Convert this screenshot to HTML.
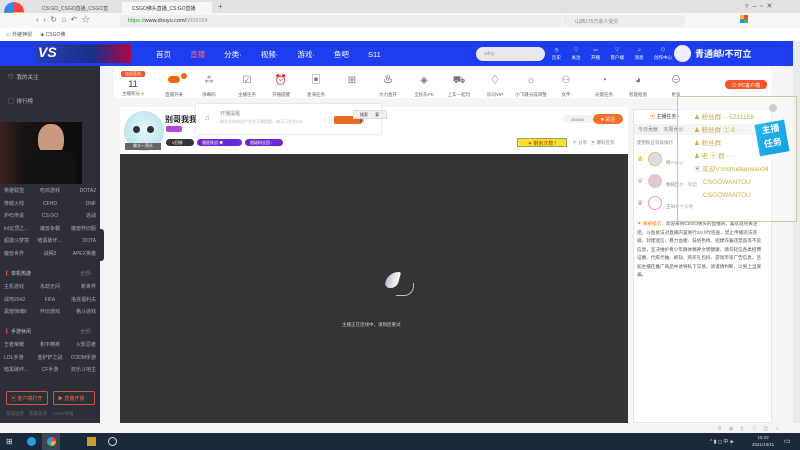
<!DOCTYPE html>
<html><head><meta charset="utf-8"><style>
*{margin:0;padding:0;box-sizing:border-box}
body{width:800px;height:450px;overflow:hidden;position:relative;background:#f5f5f5;font-family:"Liberation Sans","Noto Sans CJK SC",sans-serif;font-size:6px;color:#333}
.a{position:absolute}
.w{color:#fff}
.g{position:absolute;left:4px;width:92px;display:grid;grid-template-columns:33% 34% 33%;font-size:5px;color:#aaa;line-height:12.5px;white-space:nowrap;overflow:hidden}
.g span:nth-child(3n+2){text-align:center}.g span:nth-child(3n){text-align:right}
.ti{position:absolute;top:74px;width:40px;margin-left:-20px;text-align:center;color:#777}
.ti i{display:block;font-style:normal;font-size:10px;height:14px;line-height:14px}
.ti b{display:block;font-weight:normal;font-size:4.5px;color:#666;margin-top:4px}
</style></head><body>
<!-- tab bar -->
<div class="a" style="left:0;top:0;width:800px;height:13px;background:#e2e2e2"></div>
<div class="a" style="left:4px;top:2px;width:20px;height:20px;border-radius:50%;background:conic-gradient(#f44 0 25%,#fb3 0 50%,#3b8 0 75%,#38f 0)"></div>
<div class="a" style="left:3px;top:18px;width:24px;height:6px;background:#e53;color:#fff;font-size:4px;text-align:center">立即登录</div>
<div class="a" style="left:32px;top:2px;width:88px;height:11px;font-size:5px;color:#555;padding:3px 10px;white-space:nowrap;overflow:hidden">CS:GO_CSGO直播_CSGO直</div>
<div class="a" style="left:122px;top:2px;width:90px;height:11px;background:#f7f7f7;font-size:5px;padding:3px 10px;white-space:nowrap;overflow:hidden">CSGO佛头直播_CS:GO直播</div>
<div class="a" style="left:218px;top:2px;font-size:8px;color:#666">+</div>
<div class="a" style="left:745px;top:2px;font-size:7px;color:#555">▿ &nbsp;–&nbsp; ▫ &nbsp;✕</div>
<!-- address -->
<div class="a" style="left:0;top:13px;width:800px;height:15px;background:#f7f7f7"></div>
<div class="a" style="left:36px;top:14px;font-size:8px;color:#777">‹ &nbsp;› &nbsp;↻ &nbsp;⌂ &nbsp;↶ &nbsp;☆</div>
<div class="a" style="left:120px;top:15px;width:442px;height:12px;background:#eeeeee;font-size:5.5px;padding:3px 8px;color:#333"><span style="color:#2a2">https://</span>www.douyu.com/<span style="color:#999">6959154</span></div>
<div class="a" style="left:563px;top:15px;width:122px;height:12px;background:#eeeeee;font-size:5px;padding:3px 12px;color:#888">山西175万余人受灾</div>
<div class="a" style="left:740px;top:15px;width:8px;height:8px;background:conic-gradient(#e44 0 25%,#4b4 0 50%,#48f 0 75%,#fb2 0)"></div>
<!-- bookmarks -->
<div class="a" style="left:0;top:28px;width:800px;height:13px;background:#fff;font-size:5px;color:#555;padding:3px 6px">▭ 外链神授 &nbsp;&nbsp;&nbsp;&nbsp; ◈ CSGO佛</div>
<!-- blue nav -->
<div class="a" style="left:0;top:41px;width:793px;height:25px;background:#1d3ef0"></div>
<div class="a" style="left:36px;top:44px;width:95px;height:19px;background:linear-gradient(90deg,#2a3fa8,#1a2a70 60%,#b02 95%);opacity:.8"></div>
<div class="a w" style="left:38px;top:44px;font-size:14px;font-weight:bold;font-style:italic">VS</div>
<div class="a w" style="left:156px;top:49px;font-size:7.5px;word-spacing:17px">首页 <span style="color:#f66">直播</span> 分类· 视频· 游戏· 鱼吧 S11</div>
<div class="a" style="left:476px;top:47px;width:69px;height:14px;background:#e8e8ee;border-radius:7px;font-size:5px;color:#999;padding:4px 8px">sdoy</div>
<div class="a w" style="left:552px;top:46px;width:120px;font-size:4.5px;line-height:8px;display:flex;justify-content:space-between;text-align:center"><span>◷<br>历史</span><span>♡<br>关注</span><span>▭<br>开播</span><span>▽<br>客户端</span><span>♫<br>消息</span><span>◎<br>创作中心</span></div>
<div class="a" style="left:674px;top:45px;width:17px;height:17px;border-radius:50%;background:#eef"></div>
<div class="a w" style="left:695px;top:47px;font-size:9px;font-weight:bold">青通邮/不可立</div>
<!-- right scroll -->
<div class="a" style="left:793px;top:41px;width:7px;height:392px;background:#eaeaea"></div>
<!-- sidebar -->
<div class="a" style="left:0;top:66px;width:100px;height:357px;background:#2c2f37"></div>
<div class="a" style="left:8px;top:72px;font-size:5.5px;color:#bbb;line-height:12px">♡ &nbsp;我的关注<br><br>▢ &nbsp;排行榜<br><br>◯ &nbsp;页游中心</div>
<div class="a" style="left:0;top:122px;width:82px;height:62px;background:linear-gradient(90deg,#3a2520,#161210 30%,#0c0c0c)"></div>
<div class="a" style="left:38px;top:124px;width:26px;height:32px;border-radius:45%;background:#c99a80"></div>
<div class="a" style="left:30px;top:150px;width:46px;height:34px;border-radius:12px 12px 0 0;background:#111"></div>
<div class="g" style="top:185px"><span>英雄联盟</span><span>吃鸡游戏</span><span>DOTA2</span><span>穿越火线</span><span>CFHD</span><span>DNF</span><span>炉石传说</span><span>CS:GO</span><span>逃战</span><span>lol云顶之…</span><span>魔兽争霸</span><span>魔兽怀旧服</span><span>超激斗梦境</span><span>暗黑破坏…</span><span>DOTA</span><span>魔兽世界</span><span>战网3</span><span>APEX英雄</span></div>
<div class="a" style="left:6px;top:270px;font-size:5px;color:#ccc"><span style="color:#e44">▎</span>单机热游</div><div class="a" style="left:80px;top:270px;font-size:5px;color:#777">全部›</div>
<div class="g" style="top:281px"><span>主机游戏</span><span>永劫无间</span><span>新世界</span><span>战地2042</span><span>FIFA</span><span>洛克福利夫</span><span>黑暗惊魂6</span><span>怀旧游戏</span><span>格斗游戏</span></div>
<div class="a" style="left:6px;top:328px;font-size:5px;color:#ccc"><span style="color:#e44">▎</span>手游休闲</div><div class="a" style="left:80px;top:328px;font-size:5px;color:#777">全部›</div>
<div class="g" style="top:339px"><span>王者荣耀</span><span>和平精英</span><span>火影忍者</span><span>LOL手游</span><span>金铲铲之战</span><span>CODM手游</span><span>暗黑破坏…</span><span>CF手游</span><span>欢乐斗地主</span></div>
<div class="a" style="left:6px;top:411px;font-size:4.5px;color:#666">渠道运营 &nbsp;&nbsp;&nbsp;客服支持 &nbsp;&nbsp;&nbsp;12318举报</div>
<div class="a" style="left:6px;top:391px;width:42px;height:14px;border:1px solid #c54;border-radius:2px;color:#e64;font-size:5px;padding:3px 4px">▣ 客户端打开</div>
<div class="a" style="left:53px;top:391px;width:42px;height:14px;border:1px solid #c54;border-radius:2px;color:#e64;font-size:5px;padding:3px 4px">▶ 直播开播</div>
<div class="a" style="left:98px;top:229px;width:6px;height:32px;background:#2c2f37;border-radius:0 3px 3px 0"></div>
<!-- toolbar -->
<div class="a" style="left:114px;top:68px;width:657px;height:30px;background:#fff"></div>
<div class="a" style="left:121px;top:71px;width:24px;height:6px;background:#f5562b;color:#fff;font-size:4px;text-align:center;border-radius:2px">连续签到</div>
<div class="a" style="left:133px;top:79px;font-size:9px;transform:translateX(-50%)">11</div>
<div class="a" style="left:122px;top:91px;font-size:4.5px;color:#666">主播积分 <span style="color:#f80">●</span></div>
<div class="ti" style="left:174px"><i><span style="display:inline-block;width:12px;height:7px;background:#f60;border-radius:4px"></span></i><b>直播开关</b></div>
<div class="a" style="left:181px;top:73px;width:6px;height:6px;background:#f60;border-radius:50%"></div>
<div class="ti" style="left:209px"><i>⁂</i><b>弹幕码</b></div>
<div class="ti" style="left:247px"><i>☑</i><b>主播任务</b></div>
<div class="ti" style="left:281px"><i>⏰</i><b>开播提醒</b></div>
<div class="ti" style="left:316px"><i>▣</i><b>星海任务</b></div>
<div class="ti" style="left:352px"><i>⊞</i><b>&nbsp;</b></div>
<div class="ti" style="left:388px"><i>♨</i><b>大力金开</b></div>
<div class="ti" style="left:424px"><i>◈</i><b>全民乐PK</b></div>
<div class="ti" style="left:459px"><i>⛟</i><b>上车一起玩</b></div>
<div class="ti" style="left:495px"><i>♢</i><b>房间VIP</b></div>
<div class="ti" style="left:531px"><i>☼</i><b>小飞碟分成调整</b></div>
<div class="ti" style="left:566px"><i>⚇</i><b>女伴</b></div>
<div class="ti" style="left:604px"><i>◔</i><b>光能任务</b></div>
<div class="ti" style="left:638px"><i>◕</i><b>智能抠图</b></div>
<div class="ti" style="left:676px"><i>⊖</i><b>更多</b></div>
<div class="a" style="left:725px;top:80px;width:42px;height:9px;background:#f5562b;border-radius:4px;color:#fff;font-size:5px;text-align:center;padding-top:1.5px">⊙ PC客户端</div>
<!-- anchor info -->
<div class="a" style="left:120px;top:107px;width:508px;height:47px;background:#fff"></div>
<div class="a" style="left:124px;top:111px;width:40px;height:40px;border-radius:50%;background:radial-gradient(circle at 50% 45%,#e8f8fb,#a9dde6)"></div>
<div class="a" style="left:133px;top:126px;width:7px;height:7px;border-radius:50%;background:#333;box-shadow:14px 0 #333"></div>
<div class="a" style="left:125px;top:143px;width:36px;height:7px;background:#666;color:#fff;font-size:4px;text-align:center">佛头一哥头</div>
<div class="a" style="left:165px;top:114px;font-size:8px;font-weight:bold;color:#222">别哥我我</div>
<div class="a" style="left:166px;top:126px;width:16px;height:6px;background:#b048e0;border-radius:2px"></div>
<div class="a" style="left:166px;top:139px;width:28px;height:7px;background:#333;border-radius:4px;color:#fff;font-size:4px;padding:1px 6px">V回馈</div>
<div class="a" style="left:197px;top:139px;width:45px;height:7px;background:#6a28d8;border-radius:4px;color:#fff;font-size:4px;padding:1px 5px">福星挑战 ◆</div>
<div class="a" style="left:245px;top:139px;width:38px;height:7px;background:#6a28d8;border-radius:4px;color:#fff;font-size:4px;padding:1px 5px">超级粉丝团 ›</div>
<div class="a" style="left:196px;top:104px;width:185px;height:30px;background:#fff;box-shadow:0 0 2px #ccc;font-size:5px;color:#888;padding:6px 24px;line-height:8px">开播提醒<br><span style="font-size:4px;color:#bbb">每关注你的用户发送开播提醒，每天可发送3次</span></div>
<div class="a" style="left:204px;top:113px;font-size:8px;color:#aaa">♫</div>
<div class="a" style="left:334px;top:116px;width:28px;height:8px;background:#e86a20;border-radius:2px"></div>
<div class="a" style="left:353px;top:110px;width:34px;height:9px;background:#f0f0f0;border:1px solid #ddd;font-size:4px;padding:1px 6px;word-spacing:6px">搜索 复制</div>
<div class="a" style="left:563px;top:115px;width:30px;height:8px;background:#f2f2f2;border-radius:4px;font-size:4px;color:#888;padding:1.5px 8px">366654</div>
<div class="a" style="left:593px;top:114px;width:30px;height:10px;background:#f5702b;border-radius:5px;color:#fff;font-size:5px;text-align:center;padding-top:2px">♥ 关注</div>
<div class="a" style="left:517px;top:138px;width:50px;height:9px;background:#ffe030;border:1px solid #8a6;font-size:5px;color:#a30;text-align:center;padding-top:1px">✦ 剩余次数 !</div>
<div class="a" style="left:573px;top:140px;font-size:4.5px;color:#888">⇱ 分享 &nbsp;&nbsp;▣ 爆料签到</div>
<!-- video -->
<div class="a" style="left:120px;top:154px;width:508px;height:269px;background:#343434"></div>
<div class="a" style="left:386px;top:272px;width:13px;height:16px;background:linear-gradient(90deg,#bbc,#fff);border-radius:10px 2px 6px 6px;transform:skewX(-15deg)"></div>
<div class="a" style="left:396px;top:283px;width:18px;height:13px;border:1.5px solid #bbb;border-top:none;border-left:none;border-radius:0 0 10px 0"></div>
<div class="a" style="left:342px;top:322px;font-size:4.5px;color:#ccc">主播正在连线中，请稍后重试</div>
<!-- chat -->
<div class="a" style="left:633px;top:109px;width:139px;height:314px;background:#fff;border:1px solid #e6e6e6"></div>
<div class="a" style="left:634px;top:124px;width:137px;height:11px;background:#f2f2f2;font-size:5px;color:#888;padding:2px 4px">今日贡献 &nbsp;&nbsp;&nbsp;本周贡献</div>
<div class="a" style="left:650px;top:113px;font-size:5px;color:#444"><span style="color:#f80">▣</span> 主播任务 ›</div>
<div class="a" style="left:637px;top:140px;font-size:4.5px;color:#888">使用粉丝等级排行</div>
<div class="a" style="left:637px;top:155px;font-size:7px;color:#f5b400">♛</div>
<div class="a" style="left:648px;top:152px;width:14px;height:14px;border-radius:50%;background:#dde;border:1px solid #e8c060"></div>
<div class="a" style="left:637px;top:177px;font-size:7px;color:#bbb">♛</div>
<div class="a" style="left:648px;top:174px;width:14px;height:14px;border-radius:50%;background:#e4c8d0"></div>
<div class="a" style="left:637px;top:199px;font-size:7px;color:#d98">♛</div>
<div class="a" style="left:648px;top:196px;width:14px;height:14px;border-radius:50%;background:#fff;border:1px solid #e99"></div>
<div class="a" style="left:666px;top:152px;font-size:4.5px;color:#888;line-height:22px">韩一yyyi<br>黎铭鼠水 · 联盟<br>王叫令今天哦</div>
<div class="a" style="left:637px;top:220px;width:128px;font-size:4.6px;color:#555;line-height:8.5px"><span style="color:#f60">▣ 系统提示：</span>欢迎来到CSGO佛头的直播间，喜欢就点关注吧。斗鱼依法对直播内容进行24小时巡查，禁止传播违法违规、封建迷信、暴力血腥、低俗色情、招嫖诈骗违禁品等不良信息，坚决维护青少年群体精神文明健康。请勿轻信各类招聘征婚、代练代抽、刷钻、购买礼包码、游戏币等广告信息，且如主播在推广商品中诱导私下交易，请谨慎判断，以免上当受骗。</div>
<!-- overlay -->
<div class="a" style="left:677px;top:96px;width:120px;height:126px;border:1.5px solid #c8c8a8;background:rgba(255,255,255,.35)"></div>
<div class="a" style="left:694px;top:111px;font-size:6.5px;color:#c8b040;line-height:13px;white-space:nowrap">♟ 粉丝群 ·· 5231159<br>♟ 粉丝群 ② 8 ····<br>♟ 粉丝群<br>♟ 老 ⑤ 群 ····<br><span style="color:#8a8">▣</span> 欢迎V:mshudianwan04<br>&nbsp;&nbsp;&nbsp;&nbsp;:CSGOWANTOU<br>&nbsp;&nbsp;&nbsp;&nbsp;:CSGOWANTOU</div>
<div class="a" style="left:757px;top:122px;width:30px;height:32px;background:linear-gradient(135deg,#2bb6f0,#12a0e6);transform:rotate(-10deg);color:#fff;font-size:9px;font-weight:bold;text-align:center;line-height:14px">主播<br>任务</div>
<div class="a" style="left:769px;top:104px;width:8px;height:8px;border-radius:50%;background:#ccc"></div>
<!-- bottom strip -->
<div class="a" style="left:0;top:423px;width:800px;height:10px;background:#f5f5f5"></div>
<div class="a" style="left:718px;top:425px;font-size:5px;color:#999;word-spacing:6px">⚲ ◍ ▯ ◁ ◫ ○</div>
<!-- taskbar -->
<div class="a" style="left:0;top:433px;width:800px;height:17px;background:#1b2a3a"></div>
<div class="a" style="left:6px;top:437px;font-size:8px;color:#ddd">⊞</div>
<div class="a" style="left:27px;top:437px;width:9px;height:9px;border-radius:50%;background:#1fa0e0"></div>
<div class="a" style="left:42px;top:433px;width:18px;height:17px;background:#3a4858"></div>
<div class="a" style="left:47px;top:437px;width:9px;height:9px;border-radius:50%;background:conic-gradient(#f44 0 25%,#fb3 0 50%,#3b8 0 75%,#38f 0)"></div>
<div class="a" style="left:87px;top:437px;width:9px;height:9px;background:#c9a030"></div>
<div class="a" style="left:108px;top:437px;width:9px;height:9px;border-radius:50%;border:1px solid #ddd"></div>
<div class="a" style="left:710px;top:438px;font-size:5px;color:#ddd">^ ▮ ◻ 中 ◈</div>
<div class="a" style="left:752px;top:434px;font-size:4.5px;color:#ddd;text-align:center;line-height:7px">15:42<br>2021/10/11</div>
<div class="a" style="left:784px;top:437px;font-size:7px;color:#ddd">▭</div>
</body></html>
